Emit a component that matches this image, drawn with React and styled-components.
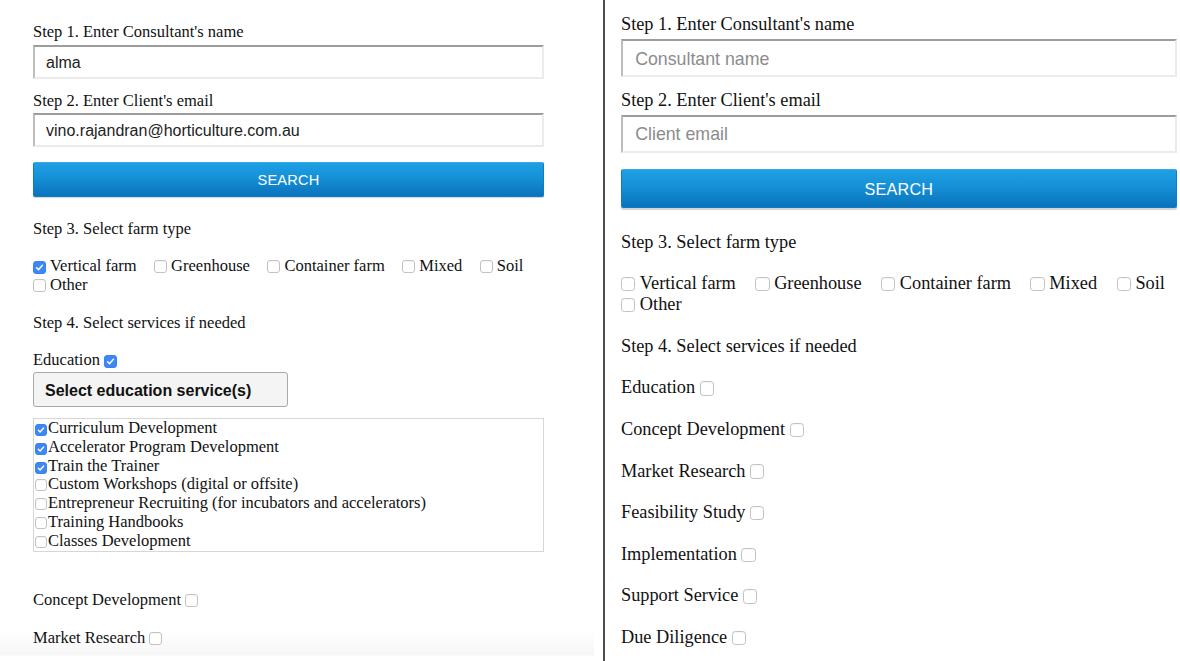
import styled, { createGlobalStyle } from "styled-components"

const GlobalStyle = createGlobalStyle`
  html, body {
    margin: 0;
    padding: 0;
    background: #fff;
    overflow: hidden;
  }

  body {
    font-family: "Liberation Serif", "Times New Roman", serif;
    font-size: 16.5px;
    color: #111;
  }
`

const Page = styled.div`
  display: flex;
  width: 1180px;
  height: 661px;
  overflow: hidden;
`

const Panel = styled.div`
  box-sizing: border-box;
  flex: none;
  width: ${(p) => p.$width}px;
  height: ${(p) => 661 / (p.$zoom || 1)}px;
  zoom: ${(p) => p.$zoom || 1};
  padding: ${(p) => p.$pad};
  margin-right: ${(p) => p.$gap || 0}px;
  overflow: hidden;
  background: ${(p) =>
    p.$fade
      ? "linear-gradient(to bottom, #fff 0, #fff 630px, #f6f6f6 655px, #fff 656px)"
      : "#fff"};
`

const Divider = styled.div`
  flex: none;
  width: 2px;
  background: #4d4d4d;
`

const StepLabel = styled.div`
  line-height: 19px;
  margin-bottom: ${(p) => p.$gap ?? 4}px;
`

const TextInput = styled.input`
  display: block;
  box-sizing: border-box;
  width: 100%;
  height: 34px;
  margin: 0 0 11.5px;
  padding: 2px 11px 0;
  border: 2px solid #ebebeb;
  border-top-color: #9c9c9c;
  border-left-color: #bdbdbd;
  border-radius: 0;
  background: #fff;
  font-family: "Liberation Sans", Arial, sans-serif;
  font-size: 16px;
  color: #222;
  outline: none;

  &::placeholder {
    color: #8c8c8c;
  }
`

const SearchButton = styled.button`
  display: block;
  box-sizing: border-box;
  width: 100%;
  height: 35px;
  margin: 15px 0 21.5px;
  padding: 1px 0 0;
  border: 1px solid #0f7cc4;
  border-top-color: #3aa8e6;
  border-radius: 2px;
  background: linear-gradient(to bottom, #1fa0e4 0%, #1590d6 45%, #0a73bc 100%);
  box-shadow: 0 1px 1px rgba(0, 0, 0, 0.18);
  font-family: "Liberation Sans", Arial, sans-serif;
  font-size: 14.6px;
  letter-spacing: 0.2px;
  color: #fff;
`

const FarmTypes = styled.div`
  display: flex;
  flex-wrap: wrap;
  column-gap: 17.5px;
  line-height: 19px;
  margin: 18px 0 19px;
`

const FarmOption = styled.label`
  white-space: nowrap;
`

const Box = styled.span`
  display: inline-flex;
  align-items: center;
  justify-content: center;
  box-sizing: border-box;
  width: ${(p) => p.$size}px;
  height: ${(p) => p.$size}px;
  margin: ${(p) => p.$margin};
  border: 1px solid ${(p) => (p.$checked ? "#3a82ee" : "#c2c2c2")};
  border-radius: 3px;
  background: ${(p) => (p.$checked ? "#3d87f5" : "#fff")};
  box-shadow: ${(p) => (p.$checked ? "none" : "inset 0 1px 1px rgba(0,0,0,0.04)")};
  vertical-align: -2px;
`

function Checkbox({ checked, size = 13, margin = "0" }) {
  return (
    <Box $checked={checked} $size={size} $margin={margin}>
      {checked && (
        <svg width={size - 2} height={size - 2} viewBox="0 0 11 11">
          <path
            d="M2.6 5.8 L4.5 7.7 L8.4 3.3"
            fill="none"
            stroke="#fff"
            strokeWidth="1.5"
            strokeLinecap="round"
            strokeLinejoin="round"
          />
        </svg>
      )}
    </Box>
  )
}

const ServiceRow = styled.div`
  line-height: 19px;
  margin-bottom: ${(p) => p.$gap ?? 18.5}px;
`

const SelectButton = styled.button`
  display: block;
  box-sizing: border-box;
  width: 255px;
  height: 35px;
  margin: 0 0 11px;
  padding: 2px 11px 0;
  border: 1px solid #a8a8a8;
  border-radius: 3px;
  background: #f4f4f4;
  text-align: left;
  font-family: "Liberation Sans", Arial, sans-serif;
  font-size: 16px;
  font-weight: bold;
  color: #111;
`

const ServiceList = styled.div`
  box-sizing: border-box;
  width: 100%;
  border: 1px solid #d6d6d6;
  margin-bottom: 38.5px;
`

const ListItem = styled.label`
  display: block;
  line-height: 18.8px;
  white-space: nowrap;
`

const farmTypes = ["Vertical farm", "Greenhouse", "Container farm", "Mixed", "Soil", "Other"]

const educationServices = [
  { name: "Curriculum Development", checked: true },
  { name: "Accelerator Program Development", checked: true },
  { name: "Train the Trainer", checked: true },
  { name: "Custom Workshops (digital or offsite)", checked: false },
  { name: "Entrepreneur Recruiting (for incubators and accelerators)", checked: false },
  { name: "Training Handbooks", checked: false },
  { name: "Classes Development", checked: false },
]

const otherServices = [
  "Concept Development",
  "Market Research",
  "Feasibility Study",
  "Implementation",
  "Support Service",
  "Due Diligence",
]

function SearchForm({ name, email, checkedFarm }) {
  return (
    <>
      <StepLabel>Step 1. Enter Consultant's name</StepLabel>
      <TextInput readOnly value={name} placeholder="Consultant name" />
      <StepLabel $gap={3.5}>Step 2. Enter Client's email</StepLabel>
      <TextInput readOnly value={email} placeholder="Client email" style={{ marginBottom: 0 }} />
      <SearchButton>SEARCH</SearchButton>
      <StepLabel $gap={0}>Step 3. Select farm type</StepLabel>
      <FarmTypes>
        {farmTypes.map((type) => (
          <FarmOption key={type}>
            <Checkbox checked={type === checkedFarm} margin="0 4px 0 0" />
            {type}
          </FarmOption>
        ))}
      </FarmTypes>
      <StepLabel $gap={18}>Step 4. Select services if needed</StepLabel>
    </>
  )
}

export default function App() {
  return (
    <>
      <GlobalStyle />
      <Page>
        <Panel $width={594} $gap={9} $pad="22px 50px 0 33px" $fade>
          <SearchForm
            name="alma"
            email="vino.rajandran@horticulture.com.au"
            checkedFarm="Vertical farm"
          />
          <ServiceRow $gap={3.5}>
            Education
            <Checkbox checked margin="0 0 0 4px" />
          </ServiceRow>
          <SelectButton>Select education service(s)</SelectButton>
          <ServiceList>
            {educationServices.map((s) => (
              <ListItem key={s.name}>
                <Checkbox checked={s.checked} size={12} margin="0 1px 0 1px" />
                {s.name}
              </ListItem>
            ))}
          </ServiceList>
          {otherServices.slice(0, 2).map((s) => (
            <ServiceRow key={s}>
              {s}
              <Checkbox margin="0 0 0 4px" />
            </ServiceRow>
          ))}
        </Panel>
        <Divider />
        <Panel $width={518} $zoom={1.11} $pad="12.5px 3px 0 14.4px">
          <SearchForm name="" email="" checkedFarm={null} />
          {["Education", ...otherServices].map((s) => (
            <ServiceRow key={s}>
              {s}
              <Checkbox margin="0 0 0 4px" />
            </ServiceRow>
          ))}
        </Panel>
      </Page>
    </>
  )
}
